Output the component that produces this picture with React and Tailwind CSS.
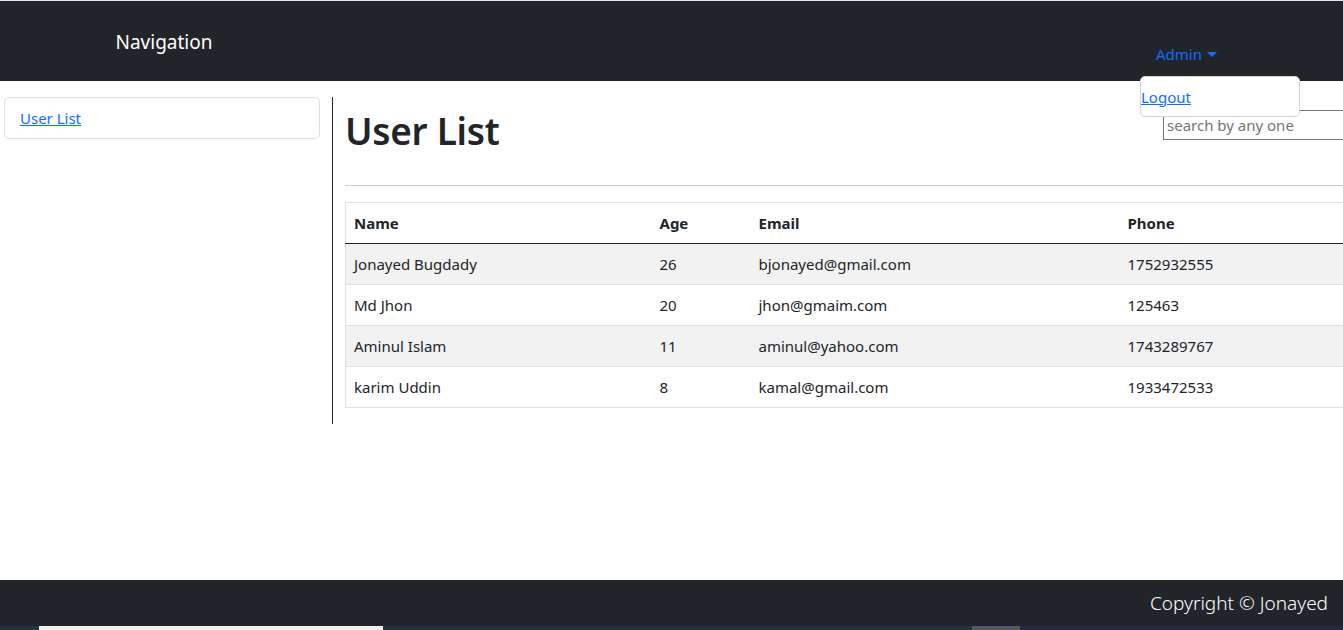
export default function App() {
  const rows = [
    ["Jonayed Bugdady", "26", "bjonayed@gmail.com", "1752932555"],
    ["Md Jhon", "20", "jhon@gmaim.com", "125463"],
    ["Aminul Islam", "11", "aminul@yahoo.com", "1743289767"],
    ["karim Uddin", "8", "kamal@gmail.com", "1933472533"],
  ];
  return (
    <div
      className="relative w-[1343px] h-[630px] overflow-hidden flex flex-col bg-white text-[#212529]"
      style={{ fontFamily: '"Noto Sans", "Open Sans", sans-serif' }}
    >
      <header className="h-[81px] shrink-0 bg-[#212529] border-t border-[#e6e6e6] flex">
        <div className="w-[328px] flex justify-center pt-[29px]">
          <span className="text-[19px] leading-[24px] text-white">Navigation</span>
        </div>
        <div className="flex-1 flex justify-end pr-[126px] pt-[26px]">
          <span className="text-[15px] leading-[24px] text-[#0d6efd] flex items-center">
            Admin
            <span className="ml-[5px] w-0 h-0 border-x-[5px] border-x-transparent border-t-[5px] border-t-[#0d6efd]"></span>
          </span>
        </div>
      </header>

      <div className="absolute left-[1140px] top-[76px] w-[160px] h-[41px] bg-white border border-[#d4d4d4] rounded-[5px] z-10 flex items-center">
        <a href="#" className="text-[15px] leading-[24px] text-[#0d6efd] underline">Logout</a>
      </div>

      <div className="flex pt-[16px]">
        <div className="w-[332px] shrink-0 pl-[4px]">
          <div className="w-[316px] h-[42px] border border-[#dedede] rounded-[5px] flex items-center pl-[15px]">
            <a href="#" className="text-[15px] text-[#0d6efd] underline">User List</a>
          </div>
        </div>
        <div className="border-l border-[#212529] h-[327px] pl-[12px] w-[1100px] shrink-0">
          <div className="flex justify-between items-start h-[88px]">
            <h1 className="text-[37px] leading-[48px] font-semibold mt-[10px] tracking-[-0.3px]">User List</h1>
            <input
              className="mt-[13px] mr-[69px] w-[200px] h-[30px] border border-[#767676] px-[3px] text-[15px] placeholder:text-[#757575] outline-none"
              placeholder="search by any one"
            />
          </div>
          <div className="h-px bg-[#cdcdcd] w-[1100px]"></div>
          <table className="mt-[16px] border border-[#dee2e6] border-collapse text-[15px] w-[1100px]">
            <thead>
              <tr className="h-[41px] border-b border-b-[#212529]">
                <th className="w-[306px] text-left pl-[8px] font-bold">Name</th>
                <th className="w-[99px] text-left pl-[8px] font-bold">Age</th>
                <th className="w-[369px] text-left pl-[8px] font-bold">Email</th>
                <th className="text-left pl-[8px] font-bold">Phone</th>
              </tr>
            </thead>
            <tbody>
              {rows.map((r, i) => (
                <tr
                  key={i}
                  className={`h-[41px] border-b border-[#dee2e6] ${i % 2 === 0 ? "bg-[#f2f2f2]" : "bg-white"}`}
                >
                  {r.map((c, j) => (
                    <td key={j} className="pl-[8px]">{c}</td>
                  ))}
                </tr>
              ))}
            </tbody>
          </table>
        </div>
      </div>

      <footer className="mt-auto h-[46px] shrink-0 bg-[#212529] flex items-center justify-end pr-[15px]">
        <span className="text-[19px] font-light text-white">Copyright © Jonayed</span>
      </footer>
      <div className="h-[4px] shrink-0 bg-[#1e3540] flex">
        <div className="ml-[39px] w-[344px] bg-[#f0f0f0]"></div>
        <div className="ml-[589px] w-[48px] bg-[#4c5a64]"></div>
        <div className="flex-1 bg-[#1f2c44]"></div>
      </div>
    </div>
  );
}
